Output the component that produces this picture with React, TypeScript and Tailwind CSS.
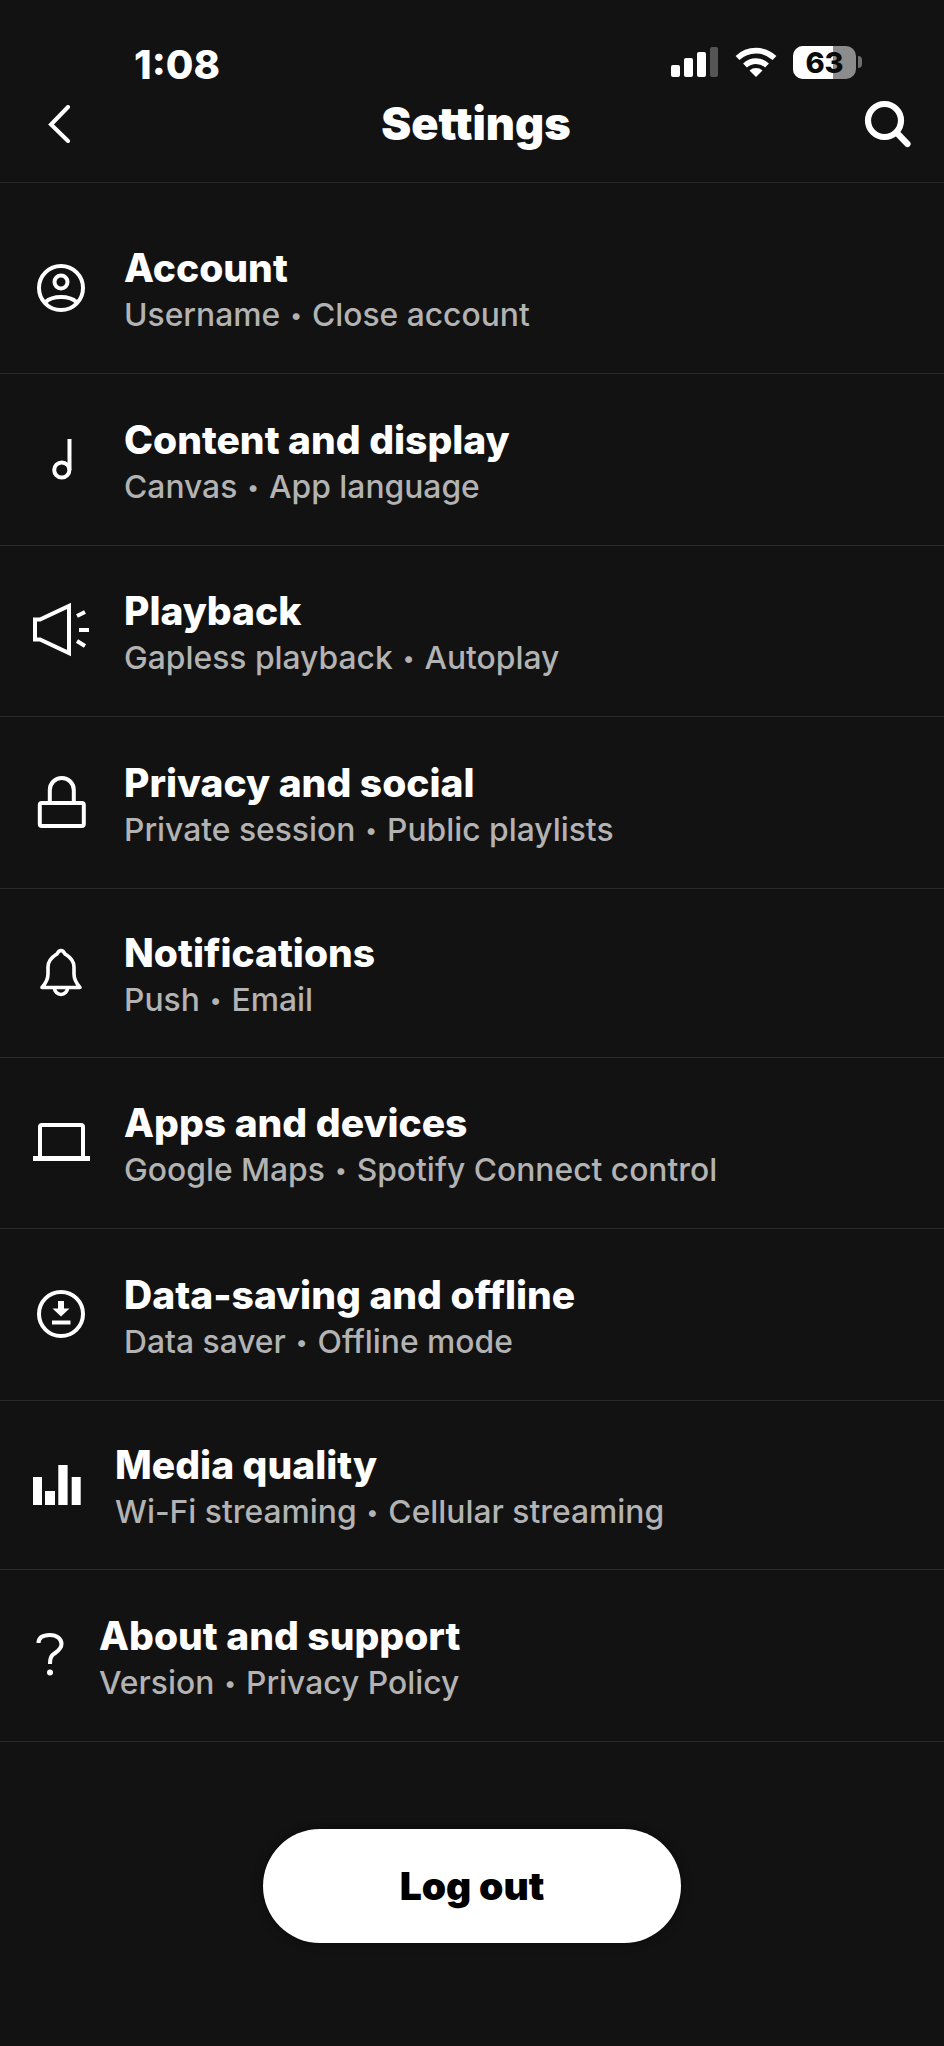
import React from "react";

const strokeProps = {
  fill: "none",
  stroke: "white",
  strokeWidth: 4,
  strokeLinecap: "round" as const,
  strokeLinejoin: "round" as const,
};

function Icon({ children }: { children: React.ReactNode }) {
  return (
    <svg width="60" height="60" viewBox="0 0 60 60" className="shrink-0">
      {children}
    </svg>
  );
}

const AccountIcon = () => (
  <Icon>
    <g {...strokeProps}>
      <circle cx="30" cy="30" r="22" />
      <circle cx="30" cy="24" r="6.5" />
      <path d="M14.5 44 C19 40 24 39 30 39 C36 39 41 40 45.5 44" />
    </g>
  </Icon>
);

const NoteIcon = () => (
  <Icon>
    <g {...strokeProps} strokeLinecap="butt">
      <path d="M38.5 9 V40" />
      <circle cx="30.8" cy="40" r="7.6" />
    </g>
  </Icon>
);

const SpeakerIcon = () => (
  <Icon>
    <g {...strokeProps}>
      <path d="M4 18.5 V38.5 H9 L38 52 V5 L9 18.5 Z" strokeLinejoin="miter" />
      <path d="M46 15 L54 11 M48 29 H58 M46 40 L54 45" strokeLinecap="butt" />
    </g>
  </Icon>
);

const LockIcon = () => (
  <Icon>
    <g {...strokeProps}>
      <rect x="8.8" y="30" width="44" height="23" rx="2" />
      <path d="M18.8 30 V17 a12 12 0 0 1 24 0 V30" />
    </g>
  </Icon>
);

const BellIcon = () => (
  <Icon>
    <g {...strokeProps} strokeWidth={3.6}>
      <path d="M11 44.5 C15 40 17 36 17 31 V24 C17 16 23 13 26 11 C27 9 28.5 7.5 30 7.5 C31.5 7.5 33 9 34 11 C37 13 43 16 43 24 V31 C43 36 45 40 49 44.5 Z" />
      <path d="M23.5 45 a6.5 6.5 0 0 0 13 0" />
    </g>
  </Icon>
);

const LaptopIcon = () => (
  <Icon>
    <path d="M9 43 V14 Q9 12 11 12 H50 Q52 12 52 14 V43" {...strokeProps} />
    <rect x="2" y="43" width="57" height="5" fill="white" />
  </Icon>
);

const DownloadIcon = () => (
  <Icon>
    <circle cx="30" cy="29" r="22" {...strokeProps} />
    <path d="M27 16 H33 V23.5 H38.5 L30 31.5 L21.5 23.5 H27 Z" fill="white" />
    <rect x="21" y="35.5" width="18.5" height="4" fill="white" />
  </Icon>
);

const BarsIcon = () => (
  <Icon>
    <rect x="2" y="22" width="9" height="28" fill="white" />
    <rect x="14" y="36" width="10" height="14" fill="white" />
    <rect x="27.3" y="10" width="9.3" height="40" fill="white" />
    <rect x="40.7" y="22" width="9" height="28" fill="white" />
  </Icon>
);

const HelpIcon = () => (
  <Icon>
    <path
      d="M7.5 17 C7.5 11 12 9 19 9 C26 9 30.5 13 30.5 18 C30.5 24 25 26 21.5 29 C19.5 31 19 33 19 38"
      {...strokeProps}
      strokeLinecap="butt"
    />
    <circle cx="19" cy="46.5" r="3" fill="white" />
  </Icon>
);

const rows = [
  { title: "Account", left: "Username", right: "Close account", icon: <AccountIcon />, rowClass: "h-[171px]", iconClass: "mr-[33px]" },
  { title: "Content and display", left: "Canvas", right: "App language", icon: <NoteIcon />, rowClass: "h-[172px]", iconClass: "mr-[33px]" },
  { title: "Playback", left: "Gapless playback", right: "Autoplay", icon: <SpeakerIcon />, rowClass: "h-[171px]", iconClass: "mr-[33px]" },
  { title: "Privacy and social", left: "Private session", right: "Public playlists", icon: <LockIcon />, rowClass: "h-[172px]", iconClass: "mr-[33px]" },
  { title: "Notifications", left: "Push", right: "Email", icon: <BellIcon />, rowClass: "h-[169px]", iconClass: "mr-[33px]" },
  { title: "Apps and devices", left: "Google Maps", right: "Spotify Connect control", icon: <LaptopIcon />, rowClass: "h-[171px]", iconClass: "mr-[33px]" },
  { title: "Data-saving and offline", left: "Data saver", right: "Offline mode", icon: <DownloadIcon />, rowClass: "h-[172px]", iconClass: "mr-[33px]" },
  { title: "Media quality", left: "Wi-Fi streaming", right: "Cellular streaming", icon: <BarsIcon />, rowClass: "h-[169px]", iconClass: "mr-[24px]" },
  { title: "About and support", left: "Version", right: "Privacy Policy", icon: <HelpIcon />, rowClass: "h-[172px]", iconClass: "mr-[8px]" },
];

function StatusBar() {
  return (
    <div className="flex h-[48px] items-center justify-between pl-[134px] pr-[82px] pt-[12px]">
      <span className="mt-[5px] text-[40px] font-extrabold leading-none text-white">1:08</span>
      <div className="flex items-center">
        <div className="flex h-[30px] items-end gap-[4px]">
          <div className="h-[12px] w-[9px] rounded-[2px] bg-white" />
          <div className="h-[19px] w-[9px] rounded-[2px] bg-white" />
          <div className="h-[25px] w-[9px] rounded-[2px] bg-white" />
          <div className="h-[30px] w-[8px] rounded-[2px] bg-[#555555]" />
        </div>
        <svg width="44" height="30" viewBox="0 0 42 30" className="ml-[16px]">
          <path d="M2.5 11 A27 27 0 0 1 39.5 11" fill="none" stroke="white" strokeWidth="5.6" />
          <path d="M10 18.5 A16 16 0 0 1 32 18.5" fill="none" stroke="white" strokeWidth="5.6" />
          <path d="M21 30 L14.5 23.5 A10 10 0 0 1 27.5 23.5 Z" fill="white" />
        </svg>
        <div className="relative ml-[15px] h-[33px] w-[63px] overflow-hidden rounded-[10px] bg-[#8c8c8c]">
          <div className="h-full w-[40px] bg-white" />
          <span className="absolute inset-0 flex items-center justify-center text-[29px] font-extrabold leading-none text-[#0a0a0a]">
            63
          </span>
        </div>
        <div className="ml-[2px] h-[12px] w-[4px] rounded-r-full bg-[#6f6f6f]" />
      </div>
    </div>
  );
}

function NavBar() {
  return (
    <div className="flex items-center justify-between pl-[48px] pr-[32px] pt-[19px]">
      <svg width="38" height="38" viewBox="0 0 38 38">
        <path d="M20 2 L3 19.5 L20 36" fill="none" stroke="white" strokeWidth="4" strokeLinecap="round" strokeLinejoin="miter" />
      </svg>
      <h1 className="ml-[2px] text-[45px] font-black leading-[50px] text-white">Settings</h1>
      <svg width="48" height="48" viewBox="0 0 48 48">
        <circle cx="20.5" cy="20.5" r="16.5" fill="none" stroke="white" strokeWidth="6.2" />
        <path d="M33 33 L43.5 44" fill="none" stroke="white" strokeWidth="6.2" strokeLinecap="round" />
      </svg>
    </div>
  );
}

export default function App() {
  return (
    <div className="h-[2046px] w-[944px] overflow-hidden bg-[#121212] font-['Inter',sans-serif]">
      <header className="h-[183px] border-b border-[#262626] pt-[32px]">
        <StatusBar />
        <NavBar />
      </header>
      <div className="pt-[20px]">
        {rows.map((row) => (
          <div key={row.title} className={`flex items-center border-b border-[#2a2a2a] pl-[31px] ${row.rowClass}`}>
            <div className={row.iconClass}>{row.icon}</div>
            <div className="pt-[3px]">
              <div className="text-[39px] font-extrabold leading-[46px] text-white">{row.title}</div>
              <div className="mt-[5px] flex items-center text-[31.8px] font-medium leading-[38px] text-[#b3b3b3]">
                {row.left}
                <span className="mx-[10px] text-[22px]">•</span>
                {row.right}
              </div>
            </div>
          </div>
        ))}
      </div>
      <div className="flex justify-center pt-[87px]">
        <button className="h-[114px] w-[418px] rounded-full bg-white text-[39px] font-black text-black shadow-[0_0_10px_rgba(0,0,0,0.5)]">
          Log out
        </button>
      </div>
    </div>
  );
}
